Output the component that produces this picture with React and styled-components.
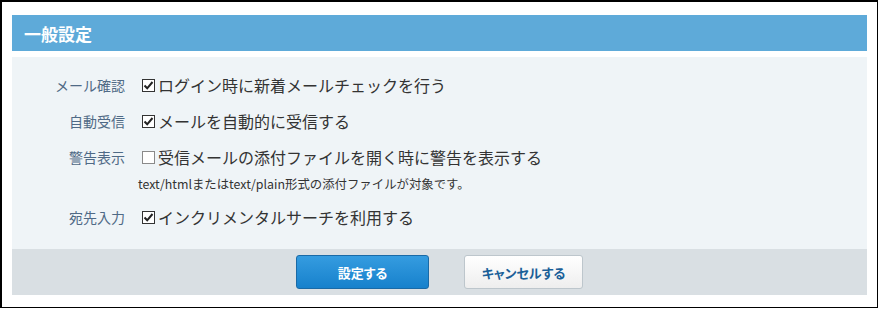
import React from 'react';
import styled, { createGlobalStyle } from 'styled-components';

const GlobalStyle = createGlobalStyle`
  html, body {
    margin: 0;
    padding: 0;
    background: #ffffff;
  }
  body {
    font-family: "Noto Sans CJK JP", "Noto Sans", sans-serif;
    color: #333333;
  }
`;

const Frame = styled.div`
  box-sizing: border-box;
  width: 878px;
  height: 308px;
  border-style: solid;
  border-color: #000000;
  border-width: 2px 1px 1px 2px;
  padding: 13px 10px 0 10px;
`;

const Header = styled.div`
  height: 36px;
  background: #5eaad9;
  display: flex;
  align-items: center;
  padding-left: 12px;
`;

const Title = styled.h2`
  margin: 0;
  font-size: 17px;
  font-weight: 700;
  color: #ffffff;
  line-height: 1;
`;

const Panel = styled.div`
  margin-top: 6px;
  background: #eff4f7;
  padding: 10px 0 14px;
`;

const Row = styled.div`
  display: flex;
  align-items: flex-start;
  padding: 6px 0;
`;

const Label = styled.div`
  width: 113px;
  flex: none;
  text-align: right;
  font-size: 14px;
  line-height: 24px;
  color: #4f6a86;
`;

const Value = styled.div`
  margin-left: 13px;
`;

const Option = styled.label`
  display: flex;
  align-items: center;
  height: 24px;
  font-size: 16px;
  line-height: 24px;
  color: #333333;
`;

const Box = styled.span`
  box-sizing: border-box;
  width: 13px;
  height: 13px;
  margin: 0 3px 0 4px;
  border: 1px solid ${(p) => (p.$checked ? '#333333' : '#8a8a8a')};
  background: #ffffff;
  display: inline-flex;
  align-items: center;
  justify-content: center;
`;

const Note = styled.div`
  margin-top: 6px;
  font-size: 12.4px;
  line-height: 18px;
  color: #333333;
`;

const Footer = styled.div`
  background: #d9dfe3;
  height: 46px;
  display: flex;
  align-items: center;
  justify-content: center;
  gap: 35px;
`;

const Button = styled.button`
  box-sizing: border-box;
  height: 34px;
  width: ${(p) => p.$width}px;
  border-radius: 3px;
  font-family: "Noto Sans CJK JP", sans-serif;
  font-size: 13px;
  font-weight: 700;
  font-feature-settings: "palt";
  cursor: pointer;
  padding: 0;
`;

const PrimaryButton = styled(Button)`
  color: #ffffff;
  background: linear-gradient(#359ce0, #1781cc);
  border: 1px solid #1a6aa6;
`;

const CancelButton = styled(Button)`
  color: #1a5f98;
  background: linear-gradient(#ffffff, #eeeeee);
  border: 1px solid #bdc6cc;
`;

const Check = ({ checked }) => (
  <Box $checked={checked}>
    {checked && (
      <svg width="11" height="11" viewBox="0 0 11 11">
        <path d="M1.5 5.5 L4.2 8.3 L9.5 2" fill="none" stroke="#222" strokeWidth="2" />
      </svg>
    )}
  </Box>
);

const SETTINGS = [
  { id: 'mail', label: 'メール確認', text: 'ログイン時に新着メールチェックを行う', checked: true },
  { id: 'auto', label: '自動受信', text: 'メールを自動的に受信する', checked: true },
  {
    id: 'warn',
    label: '警告表示',
    text: '受信メールの添付ファイルを開く時に警告を表示する',
    checked: false,
    note: 'text/htmlまたはtext/plain形式の添付ファイルが対象です。',
  },
  { id: 'dest', label: '宛先入力', text: 'インクリメンタルサーチを利用する', checked: true },
];

export default function App() {
  return (
    <>
      <GlobalStyle />
      <Frame>
        <Header>
          <Title>一般設定</Title>
        </Header>
        <Panel>
          {SETTINGS.map((s) => (
            <Row key={s.id}>
              <Label>{s.label}</Label>
              <Value>
                <Option>
                  <Check checked={s.checked} />
                  {s.text}
                </Option>
                {s.note && <Note>{s.note}</Note>}
              </Value>
            </Row>
          ))}
        </Panel>
        <Footer>
          <PrimaryButton $width={133}>設定する</PrimaryButton>
          <CancelButton $width={119}>キャンセルする</CancelButton>
        </Footer>
      </Frame>
    </>
  );
}
